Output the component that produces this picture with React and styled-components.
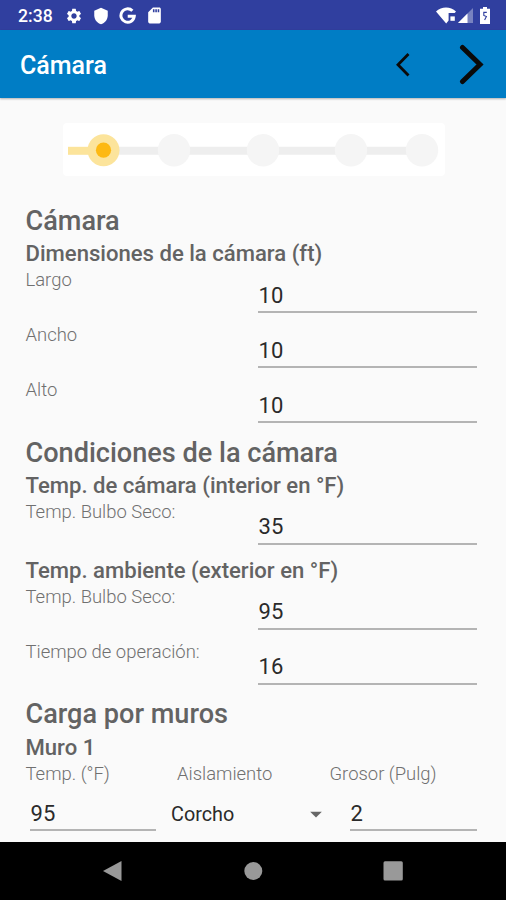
import React from "react";
import styled, { createGlobalStyle } from "styled-components";
import {
  MdSettings,
  MdShield,
  MdSdCard,
  MdArrowDropDown,
} from "react-icons/md";

const GlobalStyle = createGlobalStyle`
  * {
    box-sizing: border-box;
  }
  body {
    margin: 0;
    background: #fafafa;
    font-family: Roboto, sans-serif;
  }
`;

const Screen = styled.div`
  display: flex;
  flex-direction: column;
  width: 506px;
  height: 900px;
  overflow: hidden;
  background: #fafafa;
`;

const StatusBar = styled.div`
  flex: none;
  display: flex;
  align-items: center;
  justify-content: space-between;
  height: 30px;
  padding: 1px 16px 0 18px;
  background: #303f9f;
  color: #fff;
`;

const StatusGroup = styled.div`
  display: flex;
  align-items: center;
  gap: ${(props) => props.$gap}px;
`;

const Clock = styled.span`
  width: 38px;
  font-size: 17.6px;
  font-weight: 500;
  line-height: 20px;
`;

const AppBar = styled.header`
  flex: none;
  z-index: 1;
  display: flex;
  align-items: center;
  height: 68px;
  padding: 2px 19px 0 20px;
  background: #007dc5;
  box-shadow: 0 1px 2px rgba(0, 0, 0, 0.3);
`;

const AppTitle = styled.h1`
  flex: 1;
  margin: 0;
  color: #fff;
  font-size: 25px;
  font-weight: 500;
`;

const NavButton = styled.button`
  display: flex;
  margin: 0 0 0 ${(props) => props.$space || 0}px;
  padding: 0;
  border: none;
  background: none;
`;

const Content = styled.main`
  flex: 1;
  min-height: 0;
  overflow: hidden;
  padding: 25px 25px 0 25.5px;
`;

const StepCard = styled.div`
  width: 382px;
  height: 53px;
  margin: 0 0 27.7px 37.5px;
  border-radius: 4px;
  background: #fff;
`;

const Heading = styled.h2`
  height: 36.6px;
  margin: 0;
  color: #636363;
  font-size: 27.1px;
  font-weight: 500;
  line-height: 34.2px;
  white-space: nowrap;
`;

const SubHeading = styled.h3`
  height: 29.7px;
  margin: 0;
  color: #636363;
  font-size: 22.1px;
  font-weight: 500;
  line-height: 26.8px;
  white-space: nowrap;
`;

const Row = styled.div`
  display: grid;
  grid-template-columns: 232.5px 219px;
  height: 55.2px;
`;

const Label = styled.span`
  color: #707070;
  font-size: 18.45px;
  font-weight: 300;
  line-height: 21.4px;
  white-space: nowrap;
`;

const Field = styled.div`
  height: ${(props) => props.$height || 43}px;
  padding: ${(props) => props.$top || 12.6}px 0 0 0.6px;
  border-bottom: 2px solid #b4b4b4;
  color: #2a2a2a;
  font-size: 22px;
  font-weight: 400;
  line-height: 26px;
`;

const WallLabels = styled.div`
  display: grid;
  grid-template-columns: 151.5px 152.5px 1fr;
  height: 37px;
  padding-top: 0.6px;
`;

const WallFields = styled.div`
  display: grid;
  grid-template-columns: 126px 164px 127px;
  column-gap: 15px;
  padding-left: 4.5px;
`;

const Select = styled.div`
  display: flex;
  align-items: center;
  justify-content: space-between;
  height: 28px;
  padding-right: 5px;
  color: #2a2a2a;
  font-size: 19.8px;
`;

const BottomBar = styled.nav`
  flex: none;
  display: grid;
  grid-template-columns: repeat(3, 140px);
  justify-content: center;
  align-items: center;
  justify-items: center;
  height: 58px;
  background: #000;
`;

const GoogleIcon = () => (
  <svg width="17" height="17" viewBox="0 0 16 16" fill="none">
    <path
      d="M12.6 3.6A6.3 6.3 0 1 0 14.4 8.6H8.2"
      stroke="#fff"
      strokeWidth="2.8"
    />
  </svg>
);

const WifiIcon = () => (
  <svg width="21" height="17" viewBox="0 0 21 17">
    <path
      d="M0 4.4C5.5-.8 14.5-.8 20 4.4L18.7 6H12.6V13.5L10.2 16.4Z"
      fill="#fff"
    />
    <rect x="14.4" y="9.4" width="4.4" height="4.4" fill="#fff" />
  </svg>
);

const SignalIcon = () => (
  <svg width="15" height="15" viewBox="0 0 15 15">
    <path d="M15 0V15H0Z" fill="#fff" opacity=".35" />
    <path d="M9.5 5.5V15H0Z" fill="#fff" />
  </svg>
);

const BatteryIcon = () => (
  <svg width="10" height="17" viewBox="0 0 10 17">
    <path d="M3 0H7V1.8H10V17H0V1.8H3Z" fill="#fff" />
    <path
      d="M6.8 5.4H3.8V8.4L6.4 9.6L4.6 13"
      fill="none"
      stroke="#303f9f"
      strokeWidth="1.1"
    />
  </svg>
);

const steps = [111, 200, 288, 359];

const StepBar = () => (
  <svg width="382" height="53" viewBox="0 0 382 53">
    <path d="M5 27.8H26" stroke="#fce49b" strokeWidth="8" />
    <path d="M55 27.8H359" stroke="#eeeeee" strokeWidth="8" />
    {steps.map((x) => (
      <circle key={x} cx={x} cy="27.2" r="16.2" fill="#f5f5f5" />
    ))}
    <circle cx="40.5" cy="27.2" r="16" fill="#fce49b" />
    <circle cx="40.5" cy="27.2" r="7.6" fill="#fdb913" />
  </svg>
);

const FieldRow = ({ label, value }) => (
  <Row>
    <Label>{label}</Label>
    <Field>{value}</Field>
  </Row>
);

const App = () => {
  return (
    <>
      <GlobalStyle />
      <Screen>
        <StatusBar>
          <StatusGroup $gap={9}>
            <Clock>2:38</Clock>
            <MdSettings size={18} />
            <MdShield size={18} />
            <GoogleIcon />
            <MdSdCard size={19} />
          </StatusGroup>
          <StatusGroup $gap={7}>
            <StatusGroup $gap={1}>
              <WifiIcon />
              <SignalIcon />
            </StatusGroup>
            <BatteryIcon />
          </StatusGroup>
        </StatusBar>
        <AppBar>
          <AppTitle>Cámara</AppTitle>
          <NavButton aria-label="Anterior">
            <svg width="18" height="28" viewBox="0 0 18 28" fill="none">
              <path d="M14.5 3L4 13.7L14.5 24.5" stroke="#0a0a0a" strokeWidth="2.8" />
            </svg>
          </NavButton>
          <NavButton aria-label="Siguiente" $space={45}>
            <svg width="30" height="42" viewBox="0 0 30 42" fill="none">
              <path
                d="M5.5 3.5L23 20.5L5.5 37.5"
                stroke="#0a0a0a"
                strokeWidth="5"
                strokeLinecap="round"
              />
            </svg>
          </NavButton>
        </AppBar>
        <Content>
          <StepCard>
            <StepBar />
          </StepCard>
          <Heading>Cámara</Heading>
          <SubHeading>Dimensiones de la cámara (ft)</SubHeading>
          <FieldRow label="Largo" value="10" />
          <FieldRow label="Ancho" value="10" />
          <FieldRow label="Alto" value="10" />
          <Heading>Condiciones de la cámara</Heading>
          <SubHeading>Temp. de cámara (interior en °F)</SubHeading>
          <FieldRow label="Temp. Bulbo Seco:" value="35" />
          <SubHeading>Temp. ambiente (exterior en °F)</SubHeading>
          <FieldRow label="Temp. Bulbo Seco:" value="95" />
          <FieldRow label="Tiempo de operación:" value="16" />
          <Heading>Carga por muros</Heading>
          <SubHeading>Muro 1</SubHeading>
          <WallLabels>
            <Label>Temp. (°F)</Label>
            <Label>Aislamiento</Label>
            <Label>Grosor (Pulg)</Label>
          </WallLabels>
          <WallFields>
            <Field $height={30.4} $top={0.8}>
              95
            </Field>
            <Select>
              Corcho
              <MdArrowDropDown size={28} color="#666" />
            </Select>
            <Field $height={30.4} $top={0.8}>
              2
            </Field>
          </WallFields>
        </Content>
        <BottomBar>
          <svg width="20" height="22" viewBox="0 0 20 22">
            <path d="M18.5 1V21L0 11Z" fill="#999" />
          </svg>
          <svg width="20" height="20" viewBox="0 0 20 20">
            <circle cx="10.3" cy="10" r="9" fill="#999" />
          </svg>
          <svg width="20" height="20" viewBox="0 0 20 20">
            <rect x="0.5" y="0.3" width="19.3" height="19.3" rx="1.5" fill="#999" />
          </svg>
        </BottomBar>
      </Screen>
    </>
  );
};

export default App;
